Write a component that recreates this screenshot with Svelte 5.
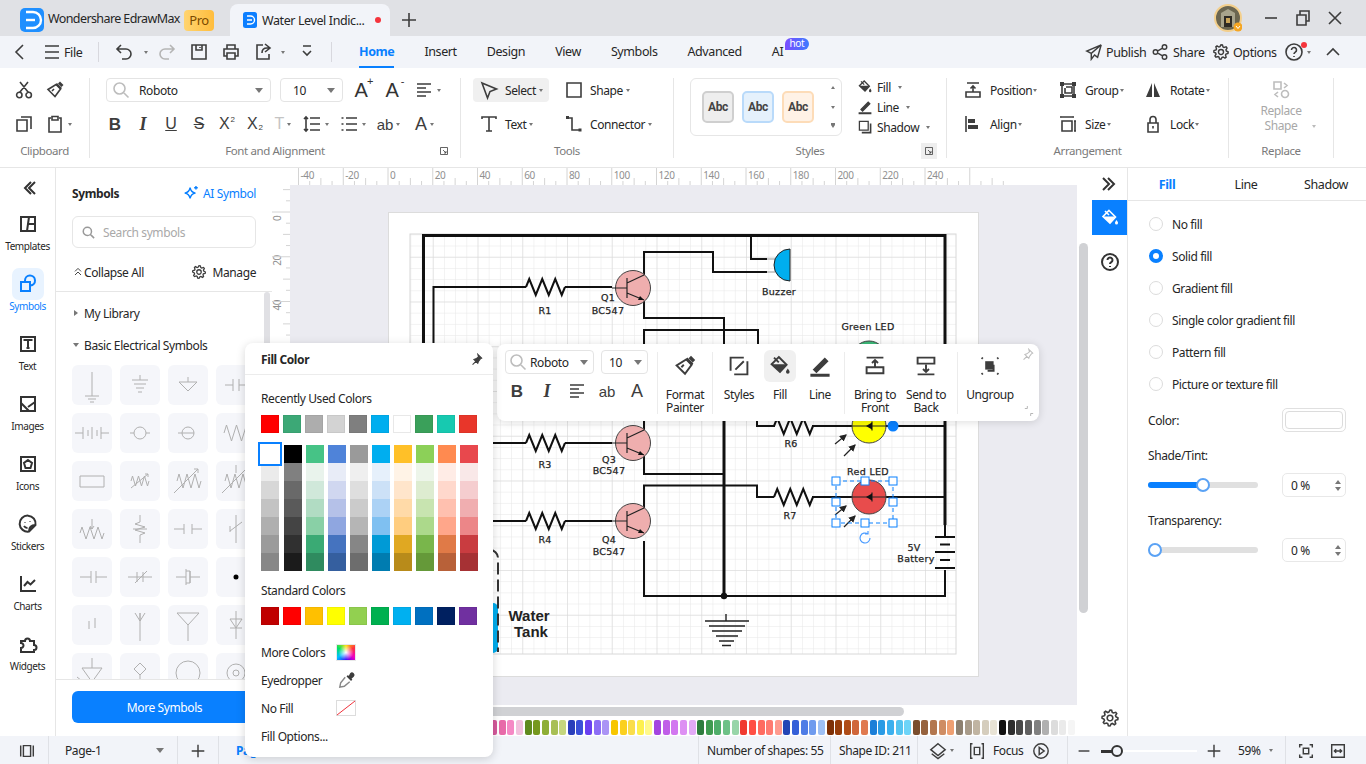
<script>
	const circle = (x, y, r) => `M${x - r} ${y}a${r} ${r} 0 1 0 ${2 * r} 0a${r} ${r} 0 1 0 ${-2 * r} 0`;

	function gear(cx, cy, ro, ri, teeth = 8) {
		let d = '';
		for (let i = 0; i < teeth * 4; i++) {
			const a = (i / (teeth * 4)) * Math.PI * 2;
			const r = i % 4 < 2 ? ro : ri;
			d += `${i ? 'L' : 'M'}${(cx + r * Math.cos(a)).toFixed(1)} ${(cy + r * Math.sin(a)).toFixed(1)}`;
		}
		return d + 'z' + circle(cx, cy, 2.8);
	}

	const icons = {
		cut: 'M6 2l8 10M14 2L6 12' + circle(5.3, 15, 2.7) + circle(14.7, 15, 2.7),
		painter: 'M11 4.5l4.5 4.5-5.5 7.5-7-7zM7 11l2-2',
		copy: 'M7 3h10v12M3 6h10v11H3z',
		paste: 'M6 4H4v14h12V4h-2M7 2.5h6v3.5H7z',
		search: circle(8.5, 8.5, 5.5) + 'M12.5 12.5l5 5',
		align: 'M3 4h14M3 8h9M3 12h14M3 16h9',
		back: 'M13 3l-7 7 7 7',
		menu: 'M3 4h14M3 10h14M3 16h14',
		undo: 'M7 3L3 7l4 4M3 7h9a5 5 0 0 1 0 10H8',
		redo: 'M13 3l4 4-4 4M17 7H8a5 5 0 0 0 0 10h4',
		save: 'M3 3h14v14H3zM7 3v5h6V3M11 5v1',
		print: 'M6 7V3h8v4M6 14H3V7h14v7h-3M6 11h8v6H6z',
		exp: 'M10 3H4v14h12v-5M12 2l5 4-5 4M17 6h-3c-3 0-5 2-5 5',
		qat: 'M6 4h8M6 9l4 4 4-4',
		send: 'M18 2L2 9l5 2.5L18 2zM7 11.5V18l3-4M18 2l-4 14-4-3',
		share: circle(15, 4.5, 2.5) + circle(5, 10, 2.5) + circle(15, 15.5, 2.5) + 'M7.2 9l5.6-3.3M7.2 11l5.6 3.3',
		gear: gear(10, 10, 8, 6),
		help: circle(10, 10, 8) + 'M7.5 8a2.5 2.5 0 1 1 3.8 2.1c-.9.6-1.3 1-1.3 2M10 14v1',
		up: 'M4 13l6-6 6 6',
		select: 'M3 3l14.5 6-6.5 2.5L8.5 18z',
		shape: 'M3 3h14v14H3z',
		ttool: 'M3 5V3h14v2M10 3v14M7 17h6',
		connector: 'M4 4h4v12h7',
		bucket: 'M9 2.5l6.5 6.5L10 15 3 8.5zM5 3l4 4',
		pen: 'M5 13l9-9 2 2-9 9z',
		shadow: 'M3 3h11v11H3z',
		position: 'M4 3h12M10 12V6M7.5 8.5L10 6l2.5 2.5M3 12h14v5H3z',
		group: 'M4 4h12v12H4zM8 7h6v6H7V8',
		align2: 'M3 2v16',
		size: 'M4 7h10v10H4zM4 3h10M17 7v10M3 2v2M15 2v2M16 7h2M16 17h2',
		lock: 'M5 9h10v9H5zM7 9V5.5a3 3 0 0 1 6 0V9M10 12v2.5',
		replace: 'M3 2h7v7H3z' + circle(14, 14, 3.5) + 'M13 3l3 2.5-3 2.5M7 12l-3 2.5 3 2.5',
		launch: 'M3 3h14v14H3zM8 8l6 6M14 10v4h-4',
		collapse: 'M13 4l-6 6 6 6M17 4l-6 6 6 6',
		expand: 'M3 4l6 6-6 6M8 4l6 6-6 6',
		templates: 'M3 3h14v14H3zM11 3L9 17M10 10h7',
		ticon: 'M3 3h14v14H3zM6.5 7V6h7v1M10 6v8M8.5 14h3',
		images: 'M3 3h14v14H3zM3 9l8 8M10 13l7-5',
		iconsbox: 'M3 3h14v14H3zM10 6l4 3-1.5 5h-5L6 9z',
		stickers: 'M17.5 11A8 8 0 1 0 11 17.5zM17.5 11c-4 0-6.5 2-6.5 6.5M7 8v.5M12 7v.5M6 12c1 1.5 2 2 3.5 2',
		charts: 'M3 2v15h15M6 12l3.5-4 3 2.5L17 6',
		widgets: 'M3 7h4a2.5 2.5 0 1 1 5 0h4v4a2.5 2.5 0 1 1 0 5v2H3v-4a2.5 2.5 0 1 0 0-5z',
		sparkle: 'M9 3c.7 4 2 5.5 6 6-4 .5-5.3 2-6 6-.7-4-2-5.5-6-6 4-.5 5.3-2 6-6zM15.5 1v4M13.5 3h4',
		dchev: 'M5 9l5-5 5 5M5 15l5-5 5 5',
		page: 'M3 4v12M17 4v12M6 4h8v12H6z',
		layers: 'M10 2l8 6.5-8 6.5-8-6.5zM3 13l7 5.5 7-5.5',
		focus: 'M5 2H3v16h2M15 2h2v16h-2M7 6h6v8H7z',
		play: circle(10, 10, 8) + 'M8 6l5.5 4L8 14z',
		minus: 'M4 10h12',
		plus: 'M3 10h14M10 3v14',
		fit: 'M3 6V3h3M14 3h3v3M3 14v3h3M14 17h3v-3M7 7h6v6H7z',
		width: 'M3 3h14v14H3zM6 10h8M8 8l-2 2 2 2M12 8l2 2-2 2',
		pin: 'M12 2l6 6-2 1-3 4-1 3-3-3-5 5 5-5-3-3 3-1 4-3z',
		styles: 'M3 14V3h11M17 6v11H6M7 13l7-7',
		bring: 'M3 3h14M10 11V5M7.5 7.5L10 5l2.5 2.5M3 11h14v5H3z',
		sendb: 'M3 17h14M10 9v6M7.5 12.5L10 15l2.5-2.5M3 3h14v5H3z',
		ungroup: 'M3 3l1 1M17 3l-1 1M3 17l1-1M17 17l-1-1M13 9v5H8',
		dropper: 'M8 7l-5 6-1 5 5-1 6-5',
		rotate: 'M16 10a6 6 0 1 1-2-4.5M14 2v4h-4'
	};

	const fills = {
		painter: 'M12 3l5 5-1.5 1.5-5-5zM15 1.5L18.5 5l-2 2L13 3.5z',
		bucket: 'M3 8.5h12.5L10 15zM16.5 12c1 1.5 1.5 2 1.5 3a1.5 1.5 0 0 1-3 0c0-1 .5-1.5 1.5-3z',
		pen: 'M2 16.5h16V19H2zM5 13l9-9 2 2-9 9z',
		shadow: 'M16 5.5h2V18H6v-2h10z',
		align2: 'M5 5h7v4H5zM5 11h10v4H5z',
		group: 'M2 2h4v4H2zM14 2h4v4h-4zM2 14h4v4H2zM14 14h4v4h-4z',
		connector: 'M2 2h3v3H2zM14.5 14.5h3v3h-3z',
		ungroup: 'M6 6h7v7H6z',
		pin: 'M12 2l6 6-2 1-3 4-1 3-6-6 3-1 4-3z',
		dropper: 'M13.5 2.5a2 2 0 0 1 4 4l-2.5 2 1 1-1.5 1.5-5-5L11 4.5l1 1z'
	};

	const tabs = ['Home', 'Insert', 'Design', 'View', 'Symbols', 'Advanced', 'AI'];

	const rail = [
		['templates', 'Templates'],
		['symbols', 'Symbols'],
		['ticon', 'Text'],
		['images', 'Images'],
		['iconsbox', 'Icons'],
		['stickers', 'Stickers'],
		['charts', 'Charts'],
		['widgets', 'Widgets']
	];

	const zz = (x, y, w, a) => {
		const s = w / 6;
		return `M${x} ${y}l${s / 2} ${-a}l${s} ${2 * a}l${s} ${-2 * a}l${s} ${2 * a}l${s} ${-2 * a}l${s} ${2 * a}l${s / 2} ${-a}`;
	};

	const dotCell = 'M18.5 20a1.5 1.5 0 1 0 3 0a1.5 1.5 0 1 0-3 0';

	// each cell of the symbol library, drawn in a 40x40 box
	const cells = [
		['M20 7v24M13 31h14M16 34h8M18 37h4', 'M20 10v5M12 15h16M14 19h12M16 23h8M18 27h4', 'M20 12v5M11 17h18l-9 9z', 'M9 20h8M17 14v12M23 14v12M23 20h8'],
		['M3 20h8M11 14v12M16 17v6M20 14v12M25 17v6M29 14v12M29 20h8', circle(20, 20, 6) + 'M10 20h4M26 20h4', circle(20, 20, 6) + 'M14 20h12M10 20h4', zz(8, 20, 30, 8)],
		['M8 15h24v11H8z', zz(11, 20, 18, 5) + 'M11 27L28 13M25 13h3v3', zz(9, 20, 24, 7) + 'M6 32L30 8M26 8h4v4', zz(9, 20, 24, 7) + 'M6 32L30 8M20 4v8'],
		[zz(8, 24, 24, 6) + 'M20 10v10M18 17l2 3 2-3', 'M20 6v7l-5 2 10 3-10 3 10 3-5 2v8M13 20h14', 'M6 20h10M16 15v10M24 15v10M24 20h10', 'M20 6v28M14 17v6M14 22l12-9'],
		['M8 20h11M19 14v12M24 14v12M24 20h11', 'M8 20h24M17 15v10M23 15v10M15 26l12-12', 'M8 20h10M18 12v16M22 14v12M22 20h10M18 14h4v12h-4', dotCell],
		['M17 16v8M23 13v10', 'M20 8v28M15 8l5 8 5-8M20 8v8', 'M20 36V20M9 8h22l-11 12z', 'M20 6v28M14 23h12M14 14h12l-6 9z'],
		['M20 5v10M10 15h20l-10 14zM5 24l10 8', 'M20 10l6 6-6 6-6-6zM20 22v8', circle(20, 20, 12), circle(20, 20, 9) + circle(20, 20, 3) + 'M20 29v9M29 20h8']
	];

	const recent = ['#ff0000', '#3ca876', '#adadad', '#d3d3d3', '#7f7f7f', '#00aeef', '#ffffff', '#3aa05a', '#17c9b0', '#e8362a'];
	const ramps = [
		['#ffffff', '#ebebeb', '#d7d7d7', '#c3c3c3', '#afafaf', '#9b9b9b', '#878787'],
		['#000000', '#808080', '#696969', '#5a5a5a', '#444444', '#303030', '#1b1b1b'],
		['#46c386', '#e9f3ec', '#d0e8da', '#b1dcc3', '#89d0a6', '#3aaa74', '#2f8b5f'],
		['#4f83d9', '#e8ecf7', '#d0d7f0', '#b5c1e8', '#8fa6e0', '#4573bf', '#355f9f'],
		['#9a9a9a', '#efefef', '#dedede', '#cbcbcb', '#b5b5b5', '#868686', '#6d6d6d'],
		['#00aeef', '#e6f0fb', '#cce1f7', '#acd2f5', '#7fc0f1', '#009ad6', '#007cb0'],
		['#ffc028', '#fff3e6', '#ffe5cb', '#ffdaa8', '#ffcd7f', '#e0a822', '#b88b1a'],
		['#8cd058', '#edf5ea', '#ddecd0', '#c8e4b0', '#acd98b', '#79b64b', '#659939'],
		['#ff8a50', '#ffece6', '#ffd8cc', '#ffc0af', '#ffa68a', '#e07a47', '#b86139'],
		['#e8484d', '#f9e8e8', '#f5cdcf', '#f0aeb0', '#ec8688', '#c93c40', '#a63134']
	];
	const standard = ['#c00000', '#ff0000', '#ffc000', '#ffff00', '#92d050', '#00b050', '#00b0f0', '#0070c0', '#002060', '#7030a0'];

	const strip = [
		'#d65a9c', '#e86aa9', '#f589c5', '#f2c0dd',
		'#5f8a1e', '#76981f', '#8fae36', '#a8bf55', '#c5d67e',
		'#2a3ebb', '#3a4fd8', '#6a3ff0', '#8d6ef5', '#ab94f5',
		'#f7c600', '#fbd01f', '#fadd4a', '#fdf04f', '#fff98a',
		'#a445e0', '#c05ee8', '#d277f0', '#dd90f3', '#e2aaf6',
		'#2e7d3e', '#3f9b50', '#4fae6a', '#6dc187', '#98d5a9',
		'#f03a30', '#ff4f45', '#ff6b60', '#ff7a70', '#ff9a8e',
		'#2546b5', '#3560d8', '#4f7de6', '#6f9bee', '#9ec0f5',
		'#7d2f05', '#963c0a', '#b04d18', '#d0663a', '#e07a50',
		'#1b7fd8', '#2a9be5', '#3cb0ee', '#55c4f0', '#6dd4f8',
		'#7a4e2e', '#96623e', '#b3774f', '#cf8d64', '#ee9f72',
		'#8d8070', '#a89b8a', '#c0b4a2', '#d5cdbd', '#e8e3d5',
		'#111111', '#2e2e2e', '#484848', '#606060', '#808080', '#b0b0b0', '#dcdcdc', '#eaeaea', '#f5f5f5'
	];

	const radios = ['No fill', 'Solid fill', 'Gradient fill', 'Single color gradient fill', 'Pattern fill', 'Picture or texture fill'];

	const step = 44.75;
	const rulerMarks = Array.from({ length: 15 }, (_, i) => i - 2);
	const minorX = Array.from({ length: 64 }, (_, i) => 298.5 + (i * step) / 4);
	const handles = [
		[836, 481], [865, 481], [893, 481],
		[836, 502], [893, 502],
		[836, 523], [865, 523], [893, 523]
	];
</script>

{#snippet ic(name, cls = '')}
	<svg class="ic {cls}" viewBox="0 0 20 20" aria-hidden="true">
		{#if fills[name]}<path class="solid" d={fills[name]} />{/if}
		<path d={icons[name]} />
	</svg>
{/snippet}

{#snippet npn(cx, cy)}
	<circle class="q" cx={cx} cy={cy} r="17.5" />
	<path class="thin" d="M{cx - 21} {cy}h15M{cx - 6} {cy - 10}v20M{cx - 6} {cy - 5}L{cx + 11} {cy - 13}M{cx - 6} {cy + 5}L{cx + 11} {cy + 12}" />
	<path class="head" d="M{cx + 11} {cy + 12}l-6 0l2 -4z" />
{/snippet}

{#snippet led(cx, cy, colour)}
	<circle class="ledbody" cx={cx} cy={cy} r="17" fill={colour} />
	<path class="thin" d="M{cx - 17} {cy}h34M{cx + 3} {cy - 4.5}v9" />
	<path class="head" d="M{cx + 3} {cy - 3.5}v7l-6 -3.5z" />
	<path class="thin" marker-end="url(#tip)" d="M{cx - 34} {cy + 18}L{cx - 23} {cy + 9}" />
	<path class="thin" marker-end="url(#tip)" d="M{cx - 25} {cy + 30}L{cx - 14} {cy + 19}" />
{/snippet}

<div class="app">
	<header class="tabbar">
		<div class="app-logo">
			<svg viewBox="0 0 24 24" aria-hidden="true"><rect width="24" height="24" rx="5" fill="#1f8fff" /><path d="M6 4h7a8 8 0 0 1 0 16H6" fill="none" stroke="#fff" stroke-width="2.4" /><path d="M6 12h9" stroke="#fff" stroke-width="2.4" /></svg>
		</div>
		<span class="app-name">Wondershare EdrawMax</span>
		<span class="pro">Pro</span>
		<div class="doc-tab">
			<svg viewBox="0 0 14 16" aria-hidden="true"><rect width="14" height="16" rx="2.5" fill="#0d7fff" /><path d="M4 4h3.5a4 4 0 0 1 0 8H4M4 8h5" fill="none" stroke="#fff" stroke-width="1.4" /></svg>
			<span>Water Level Indic...</span>
			<i class="unsaved"></i>
		</div>
		<span class="new-tab">{@render ic('plus')}</span>
		<div class="win">
			<svg class="avatar" viewBox="0 0 28 28" aria-hidden="true">
				<circle cx="14" cy="14" r="13" fill="#6b6650" stroke="#f3cf8c" stroke-width="2" />
				<path d="M7 23V9l7-4 7 4v14z" fill="#a8a48c" />
				<path d="M10 12h8v11h-8z" fill="#2d2a24" />
				<path d="M12 14h4v5h-4z" fill="#c9a458" />
				<circle cx="24" cy="23" r="4.5" fill="#f5a623" />
				<path d="M22 22l2 2.5 2-2.5" fill="none" stroke="#fff" stroke-width="1" />
			</svg>
			<span class="w-btn">{@render ic('minus')}</span>
			<span class="w-btn"><svg class="ic" viewBox="0 0 20 20" aria-hidden="true"><path d="M4 7h9v10H4zM7 7V3h9v10h-3" /></svg></span>
			<span class="w-btn"><svg class="ic" viewBox="0 0 20 20" aria-hidden="true"><path d="M4 4l12 12M16 4L4 16" /></svg></span>
		</div>
	</header>

	<nav class="menubar">
		<span class="m-back">{@render ic('back')}</span>
		<span class="m-file">{@render ic('menu')}File</span>
		<i class="vsep"></i>
		<span class="m-btn m15 w34">{@render ic('undo')}<i class="caret"></i></span>
		<span class="m-btn m9 off">{@render ic('redo')}</span>
		<span class="m-btn m12">{@render ic('save')}</span>
		<span class="m-btn m12">{@render ic('print')}</span>
		<span class="m-btn m12 w32">{@render ic('exp')}<i class="caret"></i></span>
		<span class="m-btn m12">{@render ic('qat')}</span>
		<i class="vsep m14"></i>
		<ul class="menu-tabs">
			{#each tabs as t, i}
				<li class:active={i === 0}>{t}{#if t === 'AI'}<b class="hot">hot</b>{/if}</li>
			{/each}
		</ul>
		<div class="m-right">
			<span class="m-act a-pub">{@render ic('send')}Publish</span>
			<span class="m-act a-sha">{@render ic('share')}Share</span>
			<span class="m-act a-opt">{@render ic('gear')}Options</span>
			<span class="m-help">{@render ic('help')}<i class="caret"></i><i class="dot"></i></span>
			<span class="m-up">{@render ic('up')}</span>
		</div>
	</nav>

	<section class="ribbon">
		<div class="group g-clip">
			<div class="clip-grid">
				{@render ic('cut')}
				{@render ic('painter')}
				{@render ic('copy')}
				<span class="with-caret">{@render ic('paste')}<i class="caret"></i></span>
			</div>
			<div class="g-label">Clipboard</div>
		</div>

		<div class="group g-font">
			<div class="rows">
				<div class="font-row1">
					<div class="field font-field">{@render ic('search', 'faint')}<span>Roboto</span><i class="caret big"></i></div>
					<div class="field size-field"><span>10</span><i class="caret big"></i></div>
					<span class="glyph-a">A<sup>+</sup></span>
					<span class="glyph-a">A<sup>-</sup></span>
					<span class="with-caret">{@render ic('align')}<i class="caret"></i></span>
				</div>
				<div class="font-row2">
					<span class="g g-b">B</span>
					<span class="g g-i">I</span>
					<span class="g g-u">U</span>
					<span class="g g-s">S</span>
					<span class="g">X<small class="sup">2</small></span>
					<span class="g">X<small class="sub">2</small></span>
					<span class="g g-off">T<i class="caret"></i></span>
					<span class="with-caret"><svg class="ic" viewBox="0 0 20 20" aria-hidden="true"><path d="M8 4h10M8 10h10M8 16h10M4 3v14M2 5l2-2 2 2M2 15l2 2 2-2" /></svg><i class="caret"></i></span>
					<span class="with-caret"><svg class="ic" viewBox="0 0 20 20" aria-hidden="true"><path d="M7 4h11M7 10h11M7 16h11M2.5 4h2M2.5 10h2M2.5 16h2" /></svg><i class="caret"></i></span>
					<span class="g g-ab">ab<i class="caret"></i></span>
					<span class="g g-aa">A<i class="caret"></i></span>
				</div>
			</div>
			<div class="g-label">Font and Alignment<span class="launch">{@render ic('launch')}</span></div>
		</div>

		<div class="group g-tools">
			<div class="tools-grid">
				<span class="tool sel">{@render ic('select', 'lg')}Select<i class="caret"></i></span>
				<span class="tool">{@render ic('shape')}Shape<i class="caret"></i></span>
				<span class="tool">{@render ic('ttool', 'lg')}Text<i class="caret"></i></span>
				<span class="tool">{@render ic('connector')}Connector<i class="caret"></i></span>
			</div>
			<div class="g-label">Tools</div>
		</div>

		<div class="group g-styles">
			<div class="styles-body">
				<div class="style-box">
					<span class="abc a1">Abc</span>
					<span class="abc a2">Abc</span>
					<span class="abc a3">Abc</span>
					<div class="style-scroll">
						<i class="tri-up"></i>
						<i class="caret"></i>
						<i class="caret lined"></i>
					</div>
				</div>
				<div class="fl-list">
					<span>{@render ic('bucket')}Fill<i class="caret"></i></span>
					<span>{@render ic('pen')}Line<i class="caret"></i></span>
					<span>{@render ic('shadow')}Shadow<i class="caret"></i></span>
				</div>
			</div>
			<div class="g-label">Styles<span class="launch on">{@render ic('launch')}</span></div>
		</div>

		<div class="group g-arr">
			<div class="arr-grid">
				<span>{@render ic('position')}Position<i class="caret"></i></span>
				<span>{@render ic('group')}Group<i class="caret"></i></span>
				<span><svg class="ic" viewBox="0 0 20 20" aria-hidden="true"><path class="solid" d="M9 3L3 17h6zM11 3l6 14h-6z" /></svg>Rotate<i class="caret"></i></span>
				<span>{@render ic('align2')}Align<i class="caret"></i></span>
				<span>{@render ic('size')}Size<i class="caret"></i></span>
				<span>{@render ic('lock')}Lock <i class="caret"></i></span>
			</div>
			<div class="g-label">Arrangement</div>
		</div>

		<div class="group g-replace">
			<div class="rep">
				{@render ic('replace', 'faint')}
				<span class="rep-first">Replace</span>
				<span class="rep-shape">Shape<i class="caret"></i></span>
			</div>
			<div class="g-label">Replace</div>
		</div>
	</section>

	<main class="workspace">
		<aside class="rail">
			<div class="rail-top">{@render ic('collapse', 'bold')}</div>
			{#each rail as [icon, label]}
				<div class="rail-item" class:current={icon === 'symbols'}>
					<span class="rail-ico">
						{#if icon === 'symbols'}
							<svg class="ic bold" viewBox="0 0 20 20" aria-hidden="true"><path d="M3 8h9v9H3zM7 8V6.5a5 5 0 1 1 5.5 5H12" /></svg>
						{:else}
							{@render ic(icon, 'bold')}
						{/if}
					</span>
					<span>{label}</span>
				</div>
			{/each}
		</aside>

		<aside class="symbols">
			<div class="sym-head">
				<strong>Symbols</strong>
				<span class="ai-sym">{@render ic('sparkle')}AI Symbol</span>
			</div>
			<div class="sym-search">{@render ic('search', 'grey')}<span>Search symbols</span></div>
			<div class="sym-actions">
				<span>{@render ic('dchev', 'sm')}Collapse All</span>
				<span>{@render ic('gear')}Manage</span>
			</div>
			<div class="sym-list">
				<div class="lib"><i class="tri-r"></i>My Library</div>
				<div class="lib"><i class="tri-d"></i>Basic Electrical Symbols</div>
				<div class="cells">
					{#each cells as row}
						{#each row as d}
							<span class="cell"><svg viewBox="0 0 40 40" aria-hidden="true"><path class:blk={d === dotCell} d={d} /></svg></span>
						{/each}
					{/each}
				</div>
				<i class="list-thumb"></i>
			</div>
			<div class="sym-foot"><button class="more">More Symbols</button></div>
		</aside>

		<div class="center">
			<div class="ruler-corner"></div>
			<svg class="ruler-top" viewBox="290 168 802 17" aria-hidden="true">
				{#each minorX as x, i}
					<path class="tick" d="M{x} 185v{i % 4 === 0 ? -17 : i % 2 === 0 ? -7 : -4}" />
				{/each}
				{#each rulerMarks as k}
					<text x={388 + k * step + 2} y="179">{k * 20}</text>
				{/each}
			</svg>
			<svg class="ruler-left" viewBox="272 185 18 520" aria-hidden="true">
				{#each [0, 1, 2, 3] as k}
					<text transform="translate(281 {212 + k * step + 9}) rotate(-90)">{k * 20}</text>
				{/each}
				{#each [-1, 0, 1, 2, 3, 4, 5, 6, 7, 8, 9, 10, 11] as k}
					<path class="tick" d="M272 {212 + k * step}h18" />
					<path class="tick" d="M283 {212 + (k + 0.5) * step}h7M286 {212 + (k + 0.25) * step}h4M286 {212 + (k + 0.75) * step}h4" />
				{/each}
			</svg>

			<div class="canvas">
				<svg viewBox="290 185 787 520" aria-label="Water level indicator circuit">
					<defs>
						<pattern id="minor" patternUnits="userSpaceOnUse" x="388" y="212" width="11.1875" height="11.1875">
							<path d="M11.1875 0H0V11.1875" fill="none" stroke="#e6e6e6" stroke-width="1" />
						</pattern>
						<pattern id="major" patternUnits="userSpaceOnUse" x="388" y="212" width="44.75" height="44.75">
							<path d="M44.75 0H0V44.75" fill="none" stroke="#d8d8d8" stroke-width="1" />
						</pattern>
						<marker id="tip" markerWidth="6" markerHeight="6" refX="5" refY="3" orient="auto">
							<path d="M0 0L6 3L0 6z" fill="#222" />
						</marker>
					</defs>

					<rect class="page" x="388.5" y="212.5" width="590" height="464" />
					<rect x="410" y="234" width="546" height="420" fill="url(#minor)" />
					<rect x="410" y="234" width="546" height="420" fill="url(#major)" />
					<rect x="410" y="234" width="546" height="420" fill="none" stroke="#d8d8d8" />

					<!-- wiring -->
					<path class="w3" d="M423.5 344V235.5H945V525" />
					<path class="w2" d="M751 235v24h16M767 272h-54v-20h-69v23" />
					<path class="w2" d="M433.5 344V287H526M565 287h47" />
					<path class="w2" d="M644 300v18h80v26M644 344v-14h114v14" />
					<path class="w3" d="M724 421V596" />
					<path class="w2" d="M480 443h46M565 443h47M644 421v14M644 452v22h80" />
					<path class="w2" d="M480 521h46M565 521h47M644 512v-26.5h113V497h17M812 497h40M886 497h59" />
					<path class="w2" d="M757 421v5h18M812 426h40M886 426h59" />
					<path class="w2" d="M644 541v55h301v-26" />
					<circle cx="724" cy="596" r="3.2" fill="#111" />

					<path class="w2" d={zz(526, 287, 39, 8)} />
					<path class="w2" d={zz(526, 443, 39, 8)} />
					<path class="w2" d={zz(526, 521, 39, 8)} />
					<path class="w2" d={zz(774, 426, 39, 8)} />
					<path class="w2" d={zz(774, 497, 39, 8)} />

					{@render npn(633, 288)}
					{@render npn(633, 443)}
					{@render npn(633, 521)}

					<path class="lead" d="M767 259h8M767 272h8" />
					<path class="buzzer" d="M790 249v32a16 16 0 0 1 0-32z" />

					<circle class="ledbody" cx="869" cy="358" r="17" fill="#3dbb7a" />
					{@render led(869, 426, '#ffff00')}
					{@render led(869, 497, '#e84c4c')}
					<circle cx="893" cy="426" r="5.5" fill="#0980ff" />

					<!-- battery -->
					<path class="w2" d="M935 537h20M940 544.5h10M935 552h20M940 560h10M935 568h20M945 525v12" />

					<!-- ground -->
					<path class="w1" d="M726 614v7M705 621h44M709 626h36M712 631h30M716 636h22M719 641h15M722 645.5h9" />

					<!-- water tank -->
					<rect x="480" y="603" width="18" height="50" rx="5" fill="#00aeef" />
					<path class="dash" d="M490 550a8 8 0 0 1 8 8v94" />

					<text class="lbl" x="545" y="314">R1</text>
					<text class="lbl" x="608" y="301">Q1</text>
					<text class="lbl" x="608" y="314">BC547</text>
					<text class="lbl" x="779" y="295">Buzzer</text>
					<text class="lbl" x="868" y="330">Green LED</text>
					<text class="lbl" x="545" y="468">R3</text>
					<text class="lbl" x="609" y="463">Q3</text>
					<text class="lbl" x="609" y="474">BC547</text>
					<text class="lbl" x="545" y="543">R4</text>
					<text class="lbl" x="609" y="543">Q4</text>
					<text class="lbl" x="609" y="555">BC547</text>
					<text class="lbl" x="791" y="447">R6</text>
					<text class="lbl" x="790" y="519">R7</text>
					<text class="lbl" x="868" y="475">Red LED</text>
					<text class="lbl" x="914" y="551">5V</text>
					<text class="lbl" x="916" y="562">Battery</text>
					<text class="tank" x="529" y="621">Water</text>
					<text class="tank" x="531" y="637">Tank</text>

					<!-- selection around the red LED -->
					<rect class="sel-box" x="836" y="481" width="57" height="42" />
					{#each handles as [x, y]}
						<rect class="handle" x={x - 4} y={y - 4} width="8" height="8" />
					{/each}
					<path class="rot" d="M870 538a5 5 0 1 1-2-4M868 531v3h-3" />
				</svg>
			</div>
			<div class="vscroll"><i></i></div>
			<div class="hscroll"><i></i></div>
			<div class="strip">
				{#each strip as c}
					<i style="background:{c}"></i>
				{/each}
			</div>
			<div class="under-v"></div>
		</div>

		<div class="rrail">
			<span class="rr-top">{@render ic('expand', 'bold')}</span>
			<span class="rr-fill">{@render ic('bucket', 'white')}</span>
			<span class="rr-help">{@render ic('help', 'bold')}</span>
			<span class="rr-gear">{@render ic('gear')}</span>
		</div>

		<aside class="props">
			<div class="p-tabs">
				<span class="on">Fill</span>
				<span>Line</span>
				<span>Shadow</span>
			</div>
			<div class="radios">
				{#each radios as r, i}
					<label class="radio"><i class:checked={i === 1}></i>{r}</label>
				{/each}
			</div>
			<div class="p-row color-row"><span>Color:</span><span class="color-well"><i></i></span></div>
			<div class="p-head">Shade/Tint:</div>
			<div class="p-row slider-row">
				<div class="track half"><b></b><i class="thumb"></i></div>
				<div class="stepper"><span>0 %</span><em><i class="tri-up"></i><i class="caret big"></i></em></div>
			</div>
			<div class="p-head trans">Transparency:</div>
			<div class="p-row slider-row">
				<div class="track"><i class="thumb"></i></div>
				<div class="stepper"><span>0 %</span><em><i class="tri-up"></i><i class="caret big"></i></em></div>
			</div>
		</aside>
	</main>

	<footer class="status">
		<span class="st-view">{@render ic('page')}</span>
		<span class="st-page">Page-1<i class="caret big"></i></span>
		<span class="st-add">{@render ic('plus')}</span>
		<span class="st-cur">Page-1</span>
		<div class="st-right">
			<span class="st-a">Number of shapes: 55</span>
			<span class="st-b">Shape ID: 211</span>
			<span class="st-c">
				{@render ic('layers')}<i class="caret"></i>
				<span class="focus">{@render ic('focus')}Focus</span>
				{@render ic('play')}
			</span>
			<span class="st-d">
				{@render ic('minus')}
				<span class="zoom-track"><b></b><i></i></span>
				{@render ic('plus')}
				<span class="pct">59%<i class="caret"></i></span>
			</span>
			<span class="st-e">{@render ic('fit')}{@render ic('width')}</span>
		</div>
	</footer>

	<!-- floating text toolbar over the canvas -->
	<div class="float-bar">
		<div class="fb-font">
			<div class="fb-row">
				<div class="field fb-name">{@render ic('search', 'faint')}<span>Roboto</span><i class="caret big"></i></div>
				<div class="field fb-size"><span>10</span><i class="caret big"></i></div>
			</div>
			<div class="fb-row fb-glyphs">
				<span class="g g-b">B</span>
				<span class="g g-i">I</span>
				{@render ic('align')}
				<span class="g g-ab">ab</span>
				<span class="g g-aa">A</span>
			</div>
		</div>
		<i class="fb-sep"></i>
		<div class="fb-item w-fp">{@render ic('painter', 'lg')}<span>Format<br />Painter</span></div>
		<i class="fb-sep"></i>
		<div class="fb-item w-st">{@render ic('styles', 'lg')}<span>Styles</span></div>
		<div class="fb-item w-fi hl">{@render ic('bucket', 'lg')}<span>Fill</span></div>
		<div class="fb-item w-li">{@render ic('pen', 'lg')}<span>Line</span></div>
		<i class="fb-sep"></i>
		<div class="fb-item w-br">{@render ic('bring', 'lg')}<span>Bring to<br />Front</span></div>
		<div class="fb-item w-se">{@render ic('sendb', 'lg')}<span>Send to<br />Back</span></div>
		<i class="fb-sep"></i>
		<div class="fb-item w-un">{@render ic('ungroup', 'lg')}<span>Ungroup</span></div>
		<span class="fb-pin">{@render ic('pin', 'faint')}</span>
		<span class="fb-resize"><svg class="ic" viewBox="0 0 12 12" aria-hidden="true"><path d="M1 3h3v-3M11 9H8v3" /></svg></span>
	</div>

	<!-- fill colour picker -->
	<div class="picker">
		<div class="pk-head"><strong>Fill Color</strong>{@render ic('pin')}</div>
		<div class="pk-title first">Recently Used Colors</div>
		<div class="pk-row">
			{#each recent as c}
				<i class="sw" class:blank={c === '#ffffff'} style="background:{c}"></i>
			{/each}
		</div>
		<div class="pk-ramps">
			{#each ramps as ramp, col}
				<div class="ramp">
					{#each ramp as c, row}
						<i class:picked={col === 0 && row === 0} style="background:{c}"></i>
					{/each}
				</div>
			{/each}
		</div>
		<div class="pk-title std">Standard Colors</div>
		<div class="pk-row">
			{#each standard as c}
				<i class="sw" style="background:{c}"></i>
			{/each}
		</div>
		<div class="pk-opt opt1"><span>More Colors</span><i class="rainbow"></i></div>
		<div class="pk-opt"><span>Eyedropper</span><b class="drop">{@render ic('dropper')}</b></div>
		<div class="pk-opt"><span>No Fill</span><svg class="nofill" viewBox="0 0 20 16" aria-hidden="true"><rect x=".5" y=".5" width="19" height="15" /><path d="M1 15L19 1" /></svg></div>
		<div class="pk-opt"><span>Fill Options...</span></div>
	</div>
</div>

<style>
	:global(body) {
		margin: 0;
		background: #fff;
	}

	.app {
		position: relative;
		width: 1366px;
		height: 764px;
		overflow: hidden;
		display: flex;
		flex-direction: column;
		font-family: 'Noto Sans', sans-serif;
		font-size: 12px;
		color: #262626;
		letter-spacing: -0.4px;
		white-space: nowrap;
	}

	i {
		font-style: normal;
	}

	.ic {
		width: 20px;
		height: 20px;
		flex-shrink: 0;
		display: block;
		fill: none;
		stroke: #3d3d3d;
		stroke-width: 1.6;
	}

	.ic .solid {
		fill: #3d3d3d;
		stroke: none;
	}

	.ic.lg {
		width: 24px;
		height: 24px;
	}

	.ic.bold {
		stroke-width: 2;
		stroke: #333;
	}

	.ic.faint {
		stroke: #bdbdbd;
	}

	.ic.grey {
		stroke: #999;
		stroke-width: 2;
	}

	.ic.white {
		stroke: #fff;
	}

	.ic.white .solid {
		fill: #fff;
	}

	.ic.sm {
		width: 12px;
		height: 12px;
	}

	.caret {
		display: inline-block;
		width: 0;
		height: 0;
		border-left: 2.5px solid transparent;
		border-right: 2.5px solid transparent;
		border-top: 3px solid #777;
		margin-left: 3px;
		flex-shrink: 0;
	}

	.caret.big {
		border-left-width: 4px;
		border-right-width: 4px;
		border-top-width: 5px;
	}

	.tri-up {
		display: block;
		width: 0;
		height: 0;
		border-left: 4px solid transparent;
		border-right: 4px solid transparent;
		border-bottom: 5px solid #777;
	}

	/* title bar */
	.tabbar {
		height: 36px;
		flex-shrink: 0;
		background: #e0e1e5;
		display: flex;
		align-items: flex-end;
		position: relative;
	}

	.app-logo {
		width: 24px;
		height: 24px;
		margin: 0 0 4px 20px;
	}

	.app-logo svg {
		display: block;
	}

	.app-name {
		margin: 0 0 9px 4px;
		font-size: 12.5px;
		letter-spacing: -0.6px;
		width: 136px;
	}

	.pro {
		width: 30px;
		height: 21px;
		margin: 0 0 5px 0;
		border-radius: 4px;
		background: linear-gradient(90deg, #ffd470, #ffbd3d);
		color: #7a4a00;
		font-size: 13px;
		text-align: center;
		line-height: 20px;
	}

	.doc-tab {
		width: 160px;
		height: 32px;
		margin-left: 16px;
		background: #f2f4f9;
		border-radius: 8px 8px 0 0;
		display: flex;
		align-items: center;
		padding-left: 13px;
		box-sizing: border-box;
		position: relative;
		font-size: 12.5px;
	}

	.doc-tab svg {
		width: 14px;
		height: 16px;
		margin-right: 5px;
	}

	.unsaved {
		position: absolute;
		left: 145px;
		top: 13px;
		width: 6px;
		height: 6px;
		border-radius: 50%;
		background: #f5343c;
	}

	.new-tab {
		margin: 0 0 6px 9px;
	}

	.win {
		margin-left: auto;
		height: 36px;
		display: flex;
		align-items: center;
		padding-right: 21px;
	}

	.avatar {
		width: 28px;
		height: 28px;
		margin-right: 19px;
	}

	.w-btn {
		width: 20px;
		margin-left: 12px;
	}

	.w-btn:first-of-type {
		margin-left: 0;
	}

	/* menu row */
	.menubar {
		height: 32px;
		flex-shrink: 0;
		background: #f2f4f9;
		display: flex;
		align-items: center;
		font-size: 12.5px;
		position: relative;
	}

	.m-back {
		width: 40px;
		padding-left: 10px;
		box-sizing: border-box;
	}

	.m-file {
		width: 58px;
		display: flex;
		align-items: center;
		gap: 2px;
		padding-left: 2px;
		box-sizing: border-box;
	}

	.vsep {
		width: 1px;
		height: 20px;
		background: #d8d8de;
	}

	.m-btn {
		display: flex;
		align-items: center;
		gap: 1px;
	}

	.m-btn .caret {
		margin-left: auto;
	}

	.w34 {
		width: 34px;
	}

	.w32 {
		width: 32px;
	}

	.m-btn.off :global(path) {
		stroke: #b5b5b5;
	}

	.m9 {
		margin-left: 9px;
	}

	.m12 {
		margin-left: 12px;
	}

	.m14 {
		margin-left: 14px;
	}

	.m15 {
		margin-left: 15px;
	}

	.menu-tabs {
		list-style: none;
		margin: 0 0 0 27px;
		padding: 0;
		display: flex;
		gap: 30px;
	}

	.menu-tabs li {
		position: relative;
		line-height: 32px;
		height: 32px;
		box-sizing: border-box;
	}

	.menu-tabs li.active {
		color: #0980ff;
		font-weight: 700;
		border-bottom: 2px solid #0980ff;
	}

	.hot {
		position: absolute;
		left: 13px;
		top: 2px;
		width: 24px;
		height: 12px;
		border-radius: 7px 7px 7px 0;
		background: linear-gradient(90deg, #7b4dff, #3d7bff);
		color: #fff;
		font-size: 10px;
		font-weight: 400;
		line-height: 11px;
		text-align: center;
	}

	.m-right {
		margin-left: auto;
		display: flex;
		align-items: center;
	}

	.m-act {
		display: flex;
		align-items: center;
		gap: 3px;
	}

	.m-act :global(.ic) {
		width: 18px;
		height: 18px;
	}

	.a-pub {
		width: 66px;
	}

	.a-sha {
		width: 61px;
		gap: 4px;
	}

	.a-opt {
		width: 72px;
	}

	.m-help {
		position: relative;
		display: flex;
		align-items: center;
		width: 39px;
	}

	.dot {
		position: absolute;
		left: 17px;
		top: 0;
		width: 6px;
		height: 6px;
		border-radius: 50%;
		background: #f5343c;
	}

	.m-up {
		margin-right: 23px;
	}

	/* ribbon */
	.ribbon {
		height: 100px;
		flex-shrink: 0;
		box-sizing: border-box;
		background: #fff;
		border-bottom: 1px solid #e6e6e6;
		padding-top: 10px;
		display: flex;
		align-items: flex-start;
	}

	.group {
		height: 80px;
		box-sizing: border-box;
		border-right: 1px solid #e6e6e6;
		display: flex;
		flex-direction: column;
		flex-shrink: 0;
	}

	.group > :first-child {
		height: 66px;
		flex-shrink: 0;
	}

	.g-label {
		position: relative;
		text-align: center;
		color: #7a7a7a;
		font-size: 11.5px;
		line-height: 14px;
	}

	.launch {
		position: absolute;
		top: -1px;
		width: 16px;
		height: 16px;
		display: flex;
		align-items: center;
		justify-content: center;
	}

	.launch :global(.ic) {
		width: 10px;
		height: 10px;
	}

	.launch.on {
		background: #eee;
	}

	.g-clip {
		width: 90px;
	}

	.clip-grid {
		display: grid;
		grid-template-columns: 20px 20px;
		grid-template-rows: 24px 24px;
		row-gap: 10px;
		column-gap: 11px;
		align-items: center;
		padding-left: 14px;
	}

	.with-caret {
		display: flex;
		align-items: center;
	}

	.g-font {
		width: 371px;
	}

	.g-font .launch {
		right: 8px;
	}

	.rows {
		display: flex;
		flex-direction: column;
		gap: 10px;
	}

	.font-row1 {
		height: 24px;
		display: flex;
		align-items: center;
		padding-left: 16px;
	}

	.field {
		box-sizing: border-box;
		border: 1px solid #e4e4e4;
		border-radius: 4px;
		background: #fff;
		display: flex;
		align-items: center;
	}

	.field .caret {
		margin-left: auto;
	}

	.font-field {
		width: 165px;
		height: 24px;
		padding: 0 7px 0 4px;
		gap: 8px;
	}

	.size-field {
		width: 63px;
		height: 24px;
		margin-left: 9px;
		padding: 0 7px 0 12px;
	}

	.glyph-a {
		font-family: 'Liberation Sans', sans-serif;
		font-size: 20px;
		color: #333;
		width: 22px;
		text-align: center;
		position: relative;
		margin-left: 9px;
	}

	.size-field + .glyph-a {
		margin-left: 7px;
	}

	.glyph-a sup {
		position: absolute;
		font-size: 11px;
		top: -4px;
		right: -1px;
	}

	.font-row1 .with-caret {
		margin-left: 11px;
	}

	.font-row2 {
		height: 24px;
		display: grid;
		grid-template-columns: repeat(7, 28px) 37px 37px 35px 37px;
		align-items: center;
		justify-items: center;
		padding-left: 11px;
	}

	.g {
		font-family: 'Liberation Sans', sans-serif;
		font-size: 16px;
		color: #3d3d3d;
		display: inline-flex;
		align-items: center;
		line-height: 1;
		letter-spacing: 0;
	}

	.g-b {
		font-weight: 700;
		font-size: 17px;
	}

	.g-i {
		font-style: italic;
		font-family: 'Liberation Serif', serif;
		font-weight: 700;
		font-size: 18px;
	}

	.g-u {
		text-decoration: underline;
	}

	.g-s {
		text-decoration: line-through;
	}

	.g-off {
		color: #c4c4c4;
	}

	.g-ab {
		font-size: 15px;
	}

	.g-aa {
		font-size: 18px;
	}

	.sup,
	.sub {
		font-size: 8px;
		align-self: flex-start;
		margin-left: 1px;
	}

	.sub {
		align-self: flex-end;
	}

	.g-tools {
		width: 213px;
	}

	.tools-grid {
		display: grid;
		grid-template-columns: 91px auto;
		grid-template-rows: 24px 24px;
		row-gap: 10px;
		padding-left: 12px;
	}

	.tool {
		display: flex;
		align-items: center;
		gap: 6px;
		height: 24px;
	}

	.tool:nth-child(odd) {
		padding-left: 6px;
	}

	.tool :global(.ic.lg) {
		width: 20px;
		height: 22px;
	}

	.tool .caret {
		margin-left: -3px;
	}

	.tool.sel {
		width: 76px;
		background: #f0f0f0;
		border-radius: 4px;
		box-sizing: border-box;
	}

	.g-styles {
		width: 273px;
	}

	.g-styles .launch {
		right: 9px;
	}

	.styles-body {
		display: flex;
		padding-left: 16px;
	}

	.style-box {
		width: 152px;
		height: 58px;
		box-sizing: border-box;
		border: 1px solid #e6e6e6;
		border-radius: 6px;
		display: flex;
		align-items: center;
		padding-left: 11px;
		gap: 8px;
		position: relative;
	}

	.abc {
		width: 32px;
		height: 32px;
		box-sizing: border-box;
		border-radius: 5px;
		border: 2px solid;
		font-family: 'Roboto', sans-serif;
		font-weight: 700;
		font-size: 12px;
		text-align: center;
		line-height: 28px;
		color: #444;
	}

	.a1 {
		background: #eeeeee;
		border-color: #cfcfcf;
	}

	.a2 {
		background: #e5f1fc;
		border-color: #b9dafa;
	}

	.a3 {
		background: #fff2e6;
		border-color: #fddcb8;
	}

	.style-scroll {
		margin-left: auto;
		margin-right: 6px;
		height: 42px;
		display: flex;
		flex-direction: column;
		justify-content: space-between;
		align-items: center;
	}

	.style-scroll .caret {
		margin: 0;
	}

	.style-scroll .tri-up {
		border-left-width: 2.5px;
		border-right-width: 2.5px;
		border-bottom-width: 3px;
	}

	.style-scroll .lined {
		box-shadow: 0 -2px 0 0 #777;
	}

	.fl-list {
		margin-left: 15px;
		margin-top: -1px;
		display: flex;
		flex-direction: column;
		justify-content: space-between;
		height: 60px;
	}

	.fl-list span {
		display: flex;
		align-items: center;
		gap: 4px;
		height: 20px;
	}

	.fl-list :global(.ic) {
		width: 16px;
		height: 16px;
	}

	.g-arr {
		width: 282px;
	}

	.arr-grid {
		display: grid;
		grid-template-columns: 95px 85px auto;
		grid-template-rows: 24px 24px;
		row-gap: 10px;
		padding-left: 16px;
	}

	.arr-grid span {
		display: flex;
		align-items: center;
		gap: 7px;
	}

	.arr-grid .caret {
		margin-left: -6px;
	}

	.g-replace {
		width: 105px;
	}

	.rep {
		display: flex;
		flex-direction: column;
		align-items: center;
		color: #a8a8a8;
		line-height: 15px;
		position: relative;
		padding-top: 2px;
		box-sizing: border-box;
	}

	.rep-first {
		margin-top: 3px;
	}

	.rep-shape {
		position: relative;
	}

	.rep-shape .caret {
		position: absolute;
		left: 44px;
		top: 7px;
		border-top-color: #bbb;
	}

	/* body */
	.workspace {
		flex: 1;
		min-height: 0;
		display: flex;
	}

	.rail {
		width: 56px;
		flex-shrink: 0;
		box-sizing: border-box;
		border-right: 1px solid #e6e6e6;
	}

	.rail-top {
		height: 40px;
		display: flex;
		align-items: center;
		justify-content: center;
	}

	.rail-item {
		height: 60px;
		display: flex;
		flex-direction: column;
		align-items: center;
		font-size: 10px;
	}

	.rail-ico {
		width: 32px;
		height: 32px;
		margin-bottom: -1px;
		border-radius: 7px;
		display: flex;
		align-items: center;
		justify-content: center;
	}

	.rail-item.current {
		color: #0980ff;
	}

	.rail-item.current .rail-ico {
		background: #e8f3ff;
	}

	.rail-item.current .rail-ico :global(path) {
		stroke: #0980ff;
	}

	.symbols {
		width: 216px;
		flex-shrink: 0;
		display: flex;
		flex-direction: column;
		position: relative;
	}

	.sym-head {
		height: 48px;
		flex-shrink: 0;
		display: flex;
		align-items: center;
		justify-content: space-between;
		padding: 3px 16px 0;
		box-sizing: border-box;
	}

	.ai-sym {
		color: #0980ff;
		display: flex;
		align-items: center;
		gap: 3px;
	}

	.ai-sym :global(.ic) {
		width: 18px;
		height: 18px;
		stroke: #0980ff;
	}

	.sym-search {
		height: 32px;
		flex-shrink: 0;
		margin: 0 16px;
		box-sizing: border-box;
		border: 1px solid #e6e6e6;
		border-radius: 6px;
		color: #a9a9a9;
		display: flex;
		align-items: center;
		gap: 7px;
		padding-left: 8px;
	}

	.sym-search :global(.ic) {
		width: 15px;
		height: 15px;
	}

	.sym-actions {
		height: 44px;
		flex-shrink: 0;
		box-sizing: border-box;
		border-bottom: 1px solid #e6e6e6;
		padding: 5px 16px 0;
		display: flex;
		align-items: center;
		justify-content: space-between;
	}

	.sym-actions span {
		display: flex;
		align-items: center;
		gap: 0;
	}

	.sym-actions :global(.ic) {
		width: 12px;
		height: 12px;
	}

	.sym-actions span:last-child {
		gap: 5px;
	}

	.sym-actions span:last-child :global(.ic) {
		width: 16px;
		height: 16px;
	}

	.sym-list {
		flex: 1;
		min-height: 0;
		overflow: hidden;
		position: relative;
		padding: 5px 0 0 16px;
	}

	.lib {
		height: 32px;
		display: flex;
		align-items: center;
		gap: 6px;
		margin-left: 2px;
	}

	.tri-r {
		width: 0;
		height: 0;
		border-top: 3.5px solid transparent;
		border-bottom: 3.5px solid transparent;
		border-left: 4px solid #777;
	}

	.tri-d {
		width: 0;
		height: 0;
		border-left: 3.5px solid transparent;
		border-right: 3.5px solid transparent;
		border-top: 4px solid #777;
		margin-left: -1px;
		margin-right: -1px;
	}

	.cells {
		display: grid;
		grid-template-columns: repeat(4, 40px);
		gap: 8px;
		margin-top: 4px;
	}

	.cell {
		width: 40px;
		height: 40px;
		background: #f5f6fa;
		border-radius: 6px;
	}

	.cell svg {
		display: block;
		fill: none;
		stroke: #b0b0b0;
		stroke-width: 1;
	}

	.cell path.blk {
		fill: #000;
		stroke: #000;
		stroke-width: 2;
	}

	.list-thumb {
		position: absolute;
		right: 2px;
		top: 0;
		width: 6px;
		height: 120px;
		border-radius: 3px;
		background: #e0e0e4;
	}

	.sym-foot {
		height: 57px;
		flex-shrink: 0;
		box-sizing: border-box;
		border-top: 1px solid #e6e6e6;
		padding: 11px 0 0 16px;
	}

	.more {
		width: 185px;
		height: 32px;
		border: 0;
		border-radius: 6px;
		background: #0980ff;
		color: #fff;
		font: inherit;
		letter-spacing: inherit;
	}

	.center {
		width: 820px;
		flex-shrink: 0;
		display: grid;
		grid-template-columns: 18px 787px 15px;
		grid-template-rows: 17px 520px 14px 17px;
	}

	.ruler-corner {
		background: #fff;
	}

	.ruler-top {
		grid-column: 2 / 4;
		display: block;
		width: 802px;
		height: 17px;
		background: #fff;
	}

	.ruler-left {
		display: block;
		width: 18px;
		height: 520px;
		background: #fff;
	}

	.tick {
		stroke: #d4d4d4;
		stroke-width: 1;
		fill: none;
	}

	.ruler-top text,
	.ruler-left text {
		font-family: 'Noto Sans', sans-serif;
		font-size: 10px;
		fill: #909090;
	}

	.canvas {
		background: #ebebf1;
	}

	.canvas svg {
		display: block;
		width: 787px;
		height: 520px;
	}

	.page {
		fill: #fff;
		stroke: #dcdcdc;
	}

	.w1,
	.w2,
	.w3 {
		fill: none;
		stroke: #111;
		stroke-width: 2;
	}

	.w1 {
		stroke-width: 1.4;
		stroke: #222;
	}

	.w3 {
		stroke-width: 3;
	}

	.thin {
		fill: none;
		stroke: #222;
		stroke-width: 1.2;
	}

	.lead {
		stroke: #999;
		stroke-width: 1.2;
	}

	.q {
		fill: #efaeae;
		stroke: #444;
		stroke-width: 1;
	}

	.head {
		fill: #111;
	}

	.ledbody {
		stroke: #444;
		stroke-width: 1;
	}

	.buzzer {
		fill: #00aeef;
		stroke: #222;
		stroke-width: 1;
	}

	.dash {
		fill: none;
		stroke: #333;
		stroke-width: 2;
		stroke-dasharray: 12 5;
	}

	.lbl {
		font-family: 'DejaVu Sans', sans-serif;
		font-size: 9.5px;
		font-weight: 400;
		fill: #222;
		stroke: #222;
		stroke-width: 0.25;
		text-anchor: middle;
		letter-spacing: 0.3px;
	}

	.tank {
		font-family: 'Liberation Sans', sans-serif;
		font-size: 15px;
		font-weight: 700;
		fill: #222;
		text-anchor: middle;
		letter-spacing: 0;
	}

	.sel-box {
		fill: none;
		stroke: #0980ff;
		stroke-width: 1;
		stroke-dasharray: 4 3;
	}

	.handle {
		fill: #fff;
		stroke: #0980ff;
		stroke-width: 1;
	}

	.rot {
		fill: none;
		stroke: #4a9bff;
		stroke-width: 1.2;
	}

	.vscroll {
		background: #fff;
		padding: 58px 0 0 2px;
		box-sizing: border-box;
	}

	.vscroll i {
		display: block;
		width: 9px;
		height: 370px;
		border-radius: 5px;
		background: #d0d1d4;
	}

	.hscroll {
		grid-column: 2 / 4;
		background: #fff;
		padding-top: 2px;
		box-sizing: border-box;
	}

	.hscroll i {
		display: block;
		width: 614px;
		height: 9px;
		border-radius: 5px;
		background: #d0d1d4;
	}

	.strip {
		grid-column: 1 / 3;
		background: #fff;
		display: flex;
		justify-content: flex-end;
		align-items: center;
		gap: 1.64px;
		padding-right: 2px;
		box-sizing: border-box;
		overflow: hidden;
	}

	.strip i {
		width: 7px;
		height: 15px;
		border-radius: 2px;
		flex-shrink: 0;
	}

	.under-v {
		background: #fff;
	}

	.rrail {
		width: 36px;
		flex-shrink: 0;
		box-sizing: border-box;
		border-right: 1px solid #e6e6e6;
		display: flex;
		flex-direction: column;
		align-items: center;
		position: relative;
	}

	.rr-top {
		height: 32px;
		display: flex;
		align-items: center;
	}

	.rr-fill {
		width: 35px;
		height: 35px;
		background: #0980ff;
		display: flex;
		align-items: center;
		justify-content: center;
	}

	.rr-help {
		margin-top: 17px;
	}

	.rr-gear {
		margin-top: auto;
		margin-bottom: 8px;
	}

	.props {
		flex: 1;
		font-size: 12px;
	}

	.p-tabs {
		height: 33px;
		box-sizing: border-box;
		border-bottom: 1px solid #e6e6e6;
		display: grid;
		grid-template-columns: 78px 80px 80px;
		justify-items: center;
		align-items: center;
		padding-top: 1px;
	}

	.p-tabs span {
		font-size: 12.5px;
	}

	.p-tabs .on {
		color: #0980ff;
		font-weight: 700;
	}

	.radios {
		display: flex;
		flex-direction: column;
		padding: 7px 0 0 21px;
	}

	.radio {
		height: 32px;
		display: flex;
		align-items: center;
		gap: 9px;
	}

	.radio i {
		width: 14px;
		height: 14px;
		box-sizing: border-box;
		border-radius: 50%;
		border: 1px solid #dcdcdc;
		flex-shrink: 0;
	}

	.radio i.checked {
		border: 4px solid #0980ff;
	}

	.p-row {
		display: flex;
		align-items: center;
		justify-content: space-between;
		padding: 0 20px;
	}

	.color-row {
		height: 24px;
		margin-top: 8px;
	}

	.color-well {
		width: 64px;
		height: 24px;
		box-sizing: border-box;
		border: 1px solid #e0e0e0;
		border-radius: 5px;
		padding: 2px;
	}

	.color-well i {
		display: block;
		height: 100%;
		border: 1px solid #dcdcdc;
		border-radius: 4px;
		box-sizing: border-box;
	}

	.p-head {
		padding-left: 20px;
		margin-top: 16px;
		line-height: 16px;
	}

	.p-head.trans {
		margin-top: 16px;
	}

	.slider-row {
		height: 24px;
		margin-top: 9px;
	}

	.track {
		width: 110px;
		height: 6px;
		background: #e0e0e0;
		border-radius: 3px;
		position: relative;
	}

	.track b {
		display: block;
		width: 55px;
		height: 6px;
		background: #0980ff;
		border-radius: 3px;
	}

	.thumb {
		position: absolute;
		left: 0;
		top: -4px;
		width: 14px;
		height: 14px;
		box-sizing: border-box;
		background: #fff;
		border: 2px solid #5aa2f5;
		border-radius: 50%;
	}

	.track.half .thumb {
		left: 48px;
	}

	.stepper {
		width: 64px;
		height: 24px;
		box-sizing: border-box;
		border: 1px solid #e8e8e8;
		border-radius: 5px;
		display: flex;
		align-items: center;
		justify-content: space-between;
		padding: 0 4px 0 8px;
	}

	.stepper em {
		display: flex;
		flex-direction: column;
		gap: 3px;
		align-items: center;
	}

	.stepper .caret {
		margin: 0;
		border-left-width: 3px;
		border-right-width: 3px;
		border-top-width: 4px;
	}

	.stepper .tri-up {
		border-left-width: 3px;
		border-right-width: 3px;
		border-bottom-width: 4px;
	}

	/* status bar */
	.status {
		height: 28px;
		flex-shrink: 0;
		background: #f2f4f9;
		display: flex;
		align-items: center;
		position: relative;
	}

	.status > span {
		height: 100%;
		display: flex;
		align-items: center;
		box-sizing: border-box;
		padding-top: 1px;
	}

	.status :global(.ic) {
		width: 18px;
		height: 18px;
	}

	.st-view {
		width: 49px;
		padding-left: 18px;
		border-right: 1px solid #dfe1e6;
	}

	.st-page {
		width: 129px;
		padding: 0 13px 0 16px;
		border-right: 1px solid #dfe1e6;
	}

	.st-page .caret {
		margin-left: auto;
	}

	.st-add {
		width: 41px;
		padding-left: 11px;
		border-right: 1px solid #dfe1e6;
	}

	.st-cur {
		padding-left: 17px;
		color: #0980ff;
		font-weight: 700;
	}

	.st-right {
		position: absolute;
		left: 698px;
		top: 0;
		height: 28px;
		display: flex;
	}

	.st-right > span {
		box-sizing: border-box;
		height: 28px;
		display: flex;
		align-items: center;
		border-left: 1px solid #dfe1e6;
		padding-top: 1px;
	}

	.st-a {
		width: 132px;
		padding-left: 8px;
	}

	.st-b {
		width: 87px;
		padding-left: 8px;
	}

	.st-c {
		width: 150px;
		padding-left: 11px;
	}

	.focus {
		display: flex;
		align-items: center;
		gap: 7px;
		margin: 0 9px 0 14px;
	}

	.st-d {
		width: 218px;
		padding-left: 7px;
	}

	.zoom-track {
		display: block;
		width: 96px;
		height: 2px;
		background: #fff;
		margin: 0 8px;
		position: relative;
	}

	.zoom-track b {
		display: block;
		width: 16px;
		height: 3px;
		background: #333;
	}

	.zoom-track i {
		position: absolute;
		left: 10px;
		top: -5px;
		width: 12px;
		height: 12px;
		box-sizing: border-box;
		border: 2px solid #333;
		border-radius: 50%;
		background: #f2f4f9;
	}

	.pct {
		margin-left: 15px;
		display: flex;
		align-items: center;
	}

	.pct .caret {
		margin-left: 8px;
	}

	.st-e {
		width: 81px;
		padding-left: 11px;
		gap: 14px;
	}

	/* floating toolbar */
	.float-bar {
		position: absolute;
		left: 497px;
		top: 344px;
		width: 542px;
		height: 77px;
		box-sizing: border-box;
		background: #fff;
		border-radius: 8px;
		box-shadow: 0 1px 8px rgba(0, 0, 0, 0.14);
		display: flex;
		padding-top: 6px;
		line-height: 13px;
	}

	.fb-font {
		width: 160px;
		padding-left: 8px;
		box-sizing: border-box;
		flex-shrink: 0;
	}

	.fb-row {
		display: flex;
		gap: 7px;
	}

	.fb-name {
		width: 89px;
		height: 24px;
		padding: 0 5px 0 2px;
		gap: 2px;
	}

	.fb-size {
		width: 47px;
		height: 24px;
		padding: 0 5px 0 7px;
	}

	.fb-glyphs {
		margin: 5px 0 0 -3px;
		gap: 0;
		display: grid;
		grid-template-columns: repeat(5, 30px);
		justify-items: center;
		align-items: center;
		height: 24px;
	}

	.fb-sep {
		width: 1px;
		height: 62px;
		margin-top: 2px;
		background: #ececec;
		flex-shrink: 0;
	}

	.fb-item {
		display: flex;
		flex-direction: column;
		align-items: center;
		text-align: center;
		flex-shrink: 0;
		position: relative;
	}

	.fb-item span {
		margin-top: 10px;
	}

	.fb-item :global(.ic) {
		margin-top: 4px;
	}

	.fb-item.hl::before {
		content: '';
		position: absolute;
		left: 0;
		top: 0;
		width: 32px;
		height: 32px;
		border-radius: 6px;
		background: #f0f0f0;
	}

	.fb-item.hl :global(.ic) {
		position: relative;
	}

	.w-fp {
		width: 54px;
	}

	.w-st {
		width: 46px;
		margin-left: 3px;
	}

	.w-fi {
		width: 32px;
		margin-left: 2px;
	}

	.w-li {
		width: 48px;
	}

	.w-br {
		width: 60px;
	}

	.w-se {
		width: 42px;
		margin-right: 10px;
	}

	.w-un {
		width: 64px;
	}

	.fb-pin {
		position: absolute;
		right: 5px;
		top: 4px;
	}

	.fb-pin :global(.ic) {
		width: 13px;
		height: 13px;
	}

	.fb-pin :global(.solid) {
		fill: none;
	}

	.fb-resize {
		position: absolute;
		right: 5px;
		bottom: 5px;
	}

	.fb-resize :global(.ic) {
		width: 10px;
		height: 10px;
		stroke: #aaa;
		stroke-width: 1;
	}

	/* colour picker */
	.picker {
		position: absolute;
		left: 245px;
		top: 343px;
		width: 248px;
		height: 414px;
		box-sizing: border-box;
		background: #fff;
		border-radius: 8px;
		box-shadow: 0 2px 10px rgba(0, 0, 0, 0.16);
	}

	.pk-head {
		height: 32px;
		box-sizing: border-box;
		border-bottom: 1px solid #ececec;
		padding: 2px 10px 0 16px;
		display: flex;
		align-items: center;
		justify-content: space-between;
	}

	.pk-head :global(.ic) {
		width: 13px;
		height: 13px;
	}

	.pk-title {
		margin: 16px 0 0 16px;
		line-height: 16px;
	}

	.pk-title.std {
		margin-top: 12px;
	}

	.pk-row {
		display: flex;
		gap: 4px;
		padding-left: 16px;
		margin-top: 8px;
	}

	.sw {
		width: 18px;
		height: 18px;
		box-sizing: border-box;
		border: 1px solid rgba(0, 0, 0, 0.05);
	}

	.sw.blank {
		border-color: #e8e8e8;
	}

	.pk-ramps {
		display: flex;
		gap: 4px;
		padding-left: 16px;
		margin-top: 12px;
	}

	.ramp i {
		display: block;
		width: 18px;
		height: 18px;
		box-sizing: border-box;
	}

	.ramp i.picked {
		outline: 2px solid #0980ff;
		position: relative;
		width: 20px;
		height: 20px;
		margin: -1px 0 -1px -1px;
	}

	.pk-opt {
		height: 28px;
		padding-left: 16px;
		display: flex;
		align-items: center;
	}

	.pk-opt span {
		width: 75px;
	}

	.opt1 {
		margin-top: 13px;
	}

	.rainbow {
		width: 20px;
		height: 17px;
		background: radial-gradient(circle, #fff 0, rgba(255, 255, 255, 0) 65%), conic-gradient(#ffdf00, #ff3040, #f000c0, #3000ff, #00c0ff, #00e060, #ffdf00);
		border: 1px solid #e8e8e8;
		box-sizing: border-box;
	}

	.drop {
		display: block;
		width: 20px;
	}

	.drop :global(.ic) {
		width: 18px;
		height: 18px;
		margin-left: 2px;
		stroke: #888;
	}

	.nofill {
		width: 20px;
		height: 16px;
	}

	.nofill rect {
		fill: #fff;
		stroke: #dcdcdc;
	}

	.nofill path {
		stroke: #f0323c;
		fill: none;
	}
</style>
